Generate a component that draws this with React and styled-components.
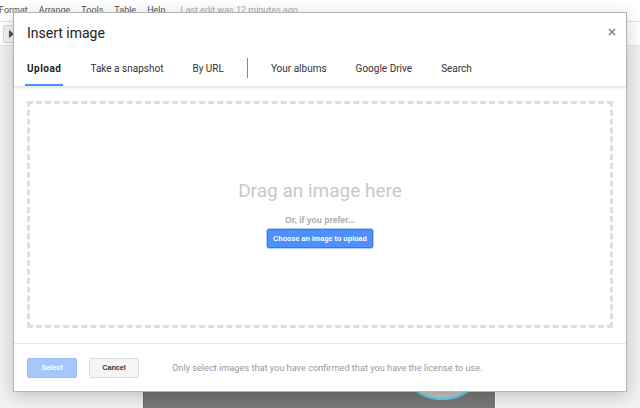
import React from 'react';
import styled, { createGlobalStyle } from 'styled-components';

const GlobalStyle = createGlobalStyle`
  html, body {
    margin: 0;
    padding: 0;
  }
  body {
    font-family: Roboto, "Liberation Sans", Arial, sans-serif;
    background: #f1f1f1;
    overflow: hidden;
  }
  * {
    box-sizing: border-box;
  }
`;

const Page = styled.div`
  position: relative;
  width: 640px;
  height: 408px;
  overflow: hidden;
  display: flex;
  flex-direction: column;
  background: #f1f1f1;
`;

const MenuBar = styled.div`
  height: 22px;
  flex: none;
  display: flex;
  gap: 11px;
  padding-top: 3px;
  background: #fff;
  border-bottom: 1px solid #e3e3e3;
  font-size: 9px;
  line-height: 14px;
  color: #555;
`;

const MenuItem = styled.span`
  &:first-child {
    margin-left: -1px;
  }
`;

const LastEdit = styled.span`
  margin-left: 4px;
  color: #aaa;
`;

const Toolbar = styled.div`
  height: 24px;
  flex: none;
  display: flex;
  align-items: center;
  padding: 0 3px;
  background: #fff;
  border-bottom: 1px solid #e3e3e3;
`;

const ToolButton = styled.div`
  width: 24px;
  height: 18px;
  display: flex;
  align-items: center;
  padding-left: 5px;
  background: #f3f3f3;
  border: 1px solid #d8d8d8;
  border-radius: 2px;
`;

const Canvas = styled.div`
  flex: 1;
  padding: 110px 0 0 143px;
`;

const Slide = styled.div`
  position: relative;
  width: 353px;
  height: 330px;
  background: #777;
  border-left: 1px solid #6a6a6a;
  border-right: 1px solid #fff;
`;

const Shape = styled.div`
  position: absolute;
  left: 252px;
  top: 151px;
  width: 93px;
  height: 93px;
  border-radius: 50%;
  background: #c4c4c4;
  border: 2px solid #5ad2ea;
`;

const Dialog = styled.div`
  position: absolute;
  top: 12px;
  left: 13px;
  width: 614px;
  height: 380px;
  display: flex;
  flex-direction: column;
  background: #fff;
  border: 1px solid #b4b4b4;
  box-shadow: 0 4px 16px rgba(0, 0, 0, 0.2);
`;

const Header = styled.div`
  height: 40px;
  flex: none;
  display: flex;
  align-items: center;
  justify-content: space-between;
  padding: 0 10px 0 13px;
`;

const Title = styled.div`
  font-size: 14px;
  color: #222;
`;

const Close = styled.button`
  width: 8px;
  height: 8px;
  padding: 0;
  border: 0;
  background: none;
  display: flex;
  margin-top: -2px;
`;

const TabRow = styled.div`
  position: relative;
  z-index: 1;
  height: 34px;
  flex: none;
  display: flex;
  align-items: stretch;
  gap: 26px;
  padding-left: 11px;
  border-bottom: 1px solid #e4e4e4;
  box-shadow: 0 1px 3px rgba(0, 0, 0, 0.1);
`;

const Tab = styled.div`
  display: flex;
  align-items: center;
  padding: 0 1px 1px 2px;
  font-size: 10px;
  font-weight: ${(p) => (p.$active ? 700 : 400)};
  letter-spacing: ${(p) => (p.$active ? '0.5px' : '0')};
  color: ${(p) => (p.$active ? '#222' : '#333')};
  border-bottom: 2px solid ${(p) => (p.$active ? '#4d90fe' : 'transparent')};
`;

const TabDivider = styled.div`
  width: 1px;
  height: 20px;
  align-self: center;
  margin: 0 -5px 3px -4px;
  background: #8a8a8a;
`;

const Body = styled.div`
  flex: 1;
  padding: 14px 13px 15px 13px;
`;

const DropZone = styled.div`
  height: 100%;
  display: flex;
  flex-direction: column;
  align-items: center;
  justify-content: center;
  border: 3px dashed #dedede;
`;

const DropTitle = styled.div`
  font-size: 19px;
  line-height: 22px;
  color: #c8c8c8;
  margin-top: -2px;
`;

const DropHint = styled.div`
  margin-top: 12px;
  font-family: "Liberation Sans", Arial, sans-serif;
  font-size: 8.5px;
  font-weight: 700;
  line-height: 12px;
  color: #aaa;
`;

const UploadButton = styled.button`
  margin-top: 3px;
  height: 19px;
  padding: 0 5px;
  font-family: "Liberation Sans", Arial, sans-serif;
  font-size: 7.2px;
  font-weight: 700;
  color: #fff;
  background: #4d90fe;
  border: 1px solid #3079ed;
  border-radius: 2px;
  box-shadow: 0 0 0 1px #b5cff8;
`;

const Footer = styled.div`
  height: 48px;
  flex: none;
  display: flex;
  align-items: center;
  gap: 12px;
  padding: 0 13px;
  border-top: 1px solid #e5e5e5;
`;

const FooterButton = styled.button`
  width: 50px;
  height: 20px;
  padding: 0;
  font-family: "Liberation Sans", Arial, sans-serif;
  font-size: 7.2px;
  font-weight: 700;
  border-radius: 2px;
  color: ${(p) => (p.$primary ? '#fff' : '#333')};
  background: ${(p) => (p.$primary ? '#a6c7fc' : '#f5f5f5')};
  border: 1px solid ${(p) => (p.$primary ? '#9cbff8' : '#dcdcdc')};
`;

const Notice = styled.div`
  margin-left: 21px;
  font-size: 9.2px;
  color: #999;
`;

const tabs = ['Upload', 'Take a snapshot', 'By URL', '|', 'Your albums', 'Google Drive', 'Search'];
const menu = ['Format', 'Arrange', 'Tools', 'Table', 'Help'];

export default function App() {
  return (
    <>
      <GlobalStyle />
      <Page>
        <MenuBar>
          {menu.map((m) => (
            <MenuItem key={m}>{m}</MenuItem>
          ))}
          <LastEdit>Last edit was 12 minutes ago</LastEdit>
        </MenuBar>
        <Toolbar>
          <ToolButton>
            <svg width="6" height="8" viewBox="0 0 6 8">
              <path d="M0 0 L5 4 L0 8 Z" fill="#555" />
            </svg>
          </ToolButton>
        </Toolbar>
        <Canvas>
          <Slide>
            <Shape />
          </Slide>
        </Canvas>

        <Dialog>
          <Header>
            <Title>Insert image</Title>
            <Close aria-label="Close">
              <svg width="8" height="8" viewBox="0 0 8 8">
                <path d="M1 1 L7 7 M7 1 L1 7" stroke="#777" strokeWidth="1.4" />
              </svg>
            </Close>
          </Header>
          <TabRow>
            {tabs.map((t, i) =>
              t === '|' ? (
                <TabDivider key={i} />
              ) : (
                <Tab key={t} $active={i === 0}>
                  {t}
                </Tab>
              )
            )}
          </TabRow>
          <Body>
            <DropZone>
              <DropTitle>Drag an image here</DropTitle>
              <DropHint>Or, if you prefer...</DropHint>
              <UploadButton>Choose an image to upload</UploadButton>
            </DropZone>
          </Body>
          <Footer>
            <FooterButton $primary>Select</FooterButton>
            <FooterButton>Cancel</FooterButton>
            <Notice>Only select images that you have confirmed that you have the license to use.</Notice>
          </Footer>
        </Dialog>
      </Page>
    </>
  );
}
